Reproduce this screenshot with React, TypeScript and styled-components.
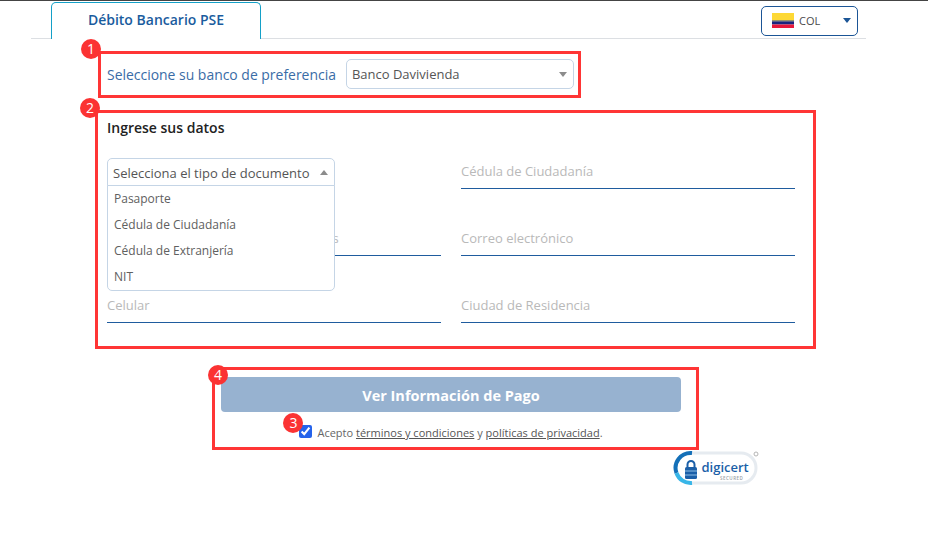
import React from 'react';
import styled, { createGlobalStyle } from 'styled-components';

const GlobalStyle = createGlobalStyle`
  html, body {
    margin: 0;
    padding: 0;
    background: #ffffff;
    font-family: 'Open Sans', 'Liberation Sans', sans-serif;
  }
`;

const Page = styled.div`
  width: 928px;
  height: 543px;
  overflow: hidden;
  border-top: 1px solid #444444;
  box-sizing: border-box;
`;

const Header = styled.header`
  display: flex;
  align-items: flex-end;
  justify-content: space-between;
  height: 37px;
  margin: 0 62px 0 31px;
  padding: 0 8px 0 20px;
  border-bottom: 1px solid #dcdfe3;
`;

const Tab = styled.div`
  box-sizing: border-box;
  width: 210px;
  height: 37px;
  margin-bottom: -1px;
  display: flex;
  align-items: center;
  justify-content: center;
  padding-bottom: 3px;
  background: #ffffff;
  border: 1px solid #14a0c8;
  border-bottom: 0;
  border-radius: 5px 5px 0 0;
  color: #1a5c9e;
  font-size: 14px;
  font-weight: 600;
`;

const CurrencySelect = styled.div`
  box-sizing: border-box;
  width: 97px;
  height: 30px;
  margin-bottom: 2px;
  display: flex;
  align-items: center;
  padding: 0 6px 1px 10px;
  border: 1px solid #1b5596;
  border-radius: 5px;
  color: #4a4a4a;
  font-size: 11px;
`;

const CurrencyCode = styled.span`
  margin-left: 5px;
  flex: 1;
`;

const Marked = styled.section<{ $left: number; $width: number; $height: number; $top: number }>`
  position: relative;
  box-sizing: border-box;
  margin: ${(p) => p.$top}px 0 0 ${(p) => p.$left}px;
  width: ${(p) => p.$width}px;
  height: ${(p) => p.$height}px;
  border: 3px solid #ff3535;
`;

const Badge = styled.span<{ $x: number; $y: number }>`
  position: absolute;
  left: ${(p) => p.$x}px;
  top: ${(p) => p.$y}px;
  width: 20px;
  height: 20px;
  border-radius: 50%;
  background: #fb3333;
  color: #ffffff;
  font-size: 14px;
  line-height: 19px;
  text-align: center;
`;

const BankRow = styled.div`
  box-sizing: border-box;
  display: flex;
  align-items: center;
  gap: 10px;
  height: 100%;
  padding: 0 0 1px 6px;
`;

const BankLabel = styled.label`
  color: #3a6ca6;
  font-size: 13.95px;
`;

const SelectBox = styled.div<{ $open?: boolean }>`
  box-sizing: border-box;
  width: 228px;
  height: ${(p) => (p.$open ? 28 : 30)}px;
  display: flex;
  align-items: center;
  justify-content: space-between;
  padding: ${(p) => (p.$open ? '1px' : '0')} 6px 0 5px;
  background: #ffffff;
  border: 1px solid #c5d5e6;
  border-radius: ${(p) => (p.$open ? '5px 5px 0 0' : '5px')};
  color: #555555;
  font-size: 13px;
`;

const Caret = styled.i<{ $up?: boolean; $color?: string }>`
  width: 0;
  height: 0;
  border-left: 4px solid transparent;
  border-right: 4px solid transparent;
  ${(p) => (p.$up ? 'border-bottom' : 'border-top')}: 5px solid ${(p) => p.$color ?? '#8c8c8c'};
`;

const DataBody = styled.div`
  padding: 5px 18px 0 9px;
`;

const Heading = styled.h2`
  margin: 0;
  color: #222222;
  font-size: 14px;
  font-weight: 600;
  line-height: 20px;
`;

const FieldGrid = styled.div`
  position: relative;
  display: grid;
  grid-template-columns: 334px 334px;
  grid-auto-rows: 67px;
  column-gap: 20px;
  margin-top: -16px;
`;

const Field = styled.div`
  box-sizing: border-box;
  height: 67px;
  display: flex;
  align-items: flex-end;
  padding-bottom: 8px;
  border-bottom: 1px solid #1f5c9e;
  color: #b9b9b9;
  font-size: 13px;
  line-height: 18px;
`;

const SelectSlot = styled.div`
  height: 67px;
`;

const Dropdown = styled.div`
  position: absolute;
  left: 0;
  top: 36px;
  z-index: 2;
  width: 228px;
`;

const Menu = styled.ul`
  box-sizing: border-box;
  height: 106px;
  margin: -1px 0 0;
  padding: 0;
  list-style: none;
  background: #ffffff;
  border: 1px solid #c5d5e6;
  border-radius: 0 0 5px 5px;
`;

const MenuItem = styled.li`
  height: 26px;
  padding-left: 6px;
  color: #606060;
  font-size: 12px;
  line-height: 25px;
`;

const PayBody = styled.div`
  display: flex;
  flex-direction: column;
  align-items: center;
  padding: 7px 15px 0 6px;
`;

const PayButton = styled.button`
  width: 460px;
  height: 35px;
  padding: 2px 0 0;
  border: 0;
  border-radius: 4px;
  background: #97b2d0;
  color: #ffffff;
  font-family: inherit;
  font-size: 14.5px;
  font-weight: 700;
`;

const Terms = styled.label`
  position: relative;
  display: flex;
  align-items: center;
  margin-top: 13px;
  color: #666666;
  font-size: 11px;
`;

const Check = styled.input`
  width: 13px;
  height: 13px;
  margin: -1px 5px 1px 0;
  accent-color: #2563eb;
`;

const TermsLink = styled.a`
  color: #555555;
  text-decoration: underline;
`;

const Seal = styled.div`
  margin: 0 0 0 673px;
  width: 88px;
  height: 40px;
`;

const ColombiaFlag = () => (
  <svg width="22" height="15" viewBox="0 0 22 15">
    <rect width="22" height="7.5" fill="#fdd835" />
    <rect y="7.5" width="22" height="1" fill="#3b3b3b" />
    <rect y="8.5" width="22" height="3" fill="#1a237e" />
    <rect y="11.5" width="22" height="3.5" fill="#e8173a" />
  </svg>
);

const DigicertSeal = () => (
  <svg width="88" height="40" viewBox="0 0 88 40">
    <rect x="2" y="3" width="81" height="30" rx="15" fill="#ffffff" stroke="#e6ebf0" strokeWidth="3" />
    <path d="M19 3 A15 15 0 0 0 3.5 23" fill="none" stroke="#1470b8" strokeWidth="4" />
    <path d="M3.5 23 A15 15 0 0 0 19 33" fill="none" stroke="#38b6e8" strokeWidth="4" />
    <path d="M14.5 17 v-2.5 a3.5 3.5 0 0 1 7 0 v2.5" fill="none" stroke="#1b5fa8" strokeWidth="2" />
    <rect x="12" y="17" width="12" height="12" rx="1.5" fill="#1b5fa8" />
    <path d="M12 21 h12 M12 25 h12" stroke="#8fc0e6" strokeWidth="1" />
    <text x="28.5" y="22" fontFamily="Open Sans, sans-serif" fontSize="13" fontWeight="600" fill="#1b5fa8">digicert</text>
    <text x="47" y="29.5" fontFamily="Open Sans, sans-serif" fontSize="4.5" fontWeight="600" letterSpacing="0.5" fill="#9aa0a6">SECURED</text>
    <circle cx="83" cy="4" r="2" fill="#ffffff" stroke="#b5b5b5" />
  </svg>
);

const documentTypes = ['Pasaporte', 'Cédula de Ciudadanía', 'Cédula de Extranjería', 'NIT'];

export default function App() {
  return (
    <Page>
      <GlobalStyle />
      <Header>
        <Tab>Débito Bancario PSE</Tab>
        <CurrencySelect>
          <ColombiaFlag />
          <CurrencyCode>COL</CurrencyCode>
          <Caret $color="#1b5596" />
        </CurrencySelect>
      </Header>

      <Marked $top={12} $left={98} $width={483} $height={47}>
        <Badge $x={-20} $y={-15}>1</Badge>
        <BankRow>
          <BankLabel>Seleccione su banco de preferencia</BankLabel>
          <SelectBox>
            Banco Davivienda
            <Caret />
          </SelectBox>
        </BankRow>
      </Marked>

      <Marked $top={12} $left={95} $width={721} $height={239}>
        <Badge $x={-18} $y={-15}>2</Badge>
        <DataBody>
          <Heading>Ingrese sus datos</Heading>
          <FieldGrid>
            <SelectSlot />
            <Field>Cédula de Ciudadanía</Field>
            <Field>Nombres y Apellidos de los pagadores</Field>
            <Field>Correo electrónico</Field>
            <Field>Celular</Field>
            <Field>Ciudad de Residencia</Field>
            <Dropdown>
              <SelectBox $open>
                Selecciona el tipo de documento
                <Caret $up />
              </SelectBox>
              <Menu>
                {documentTypes.map((name) => (
                  <MenuItem key={name}>{name}</MenuItem>
                ))}
              </Menu>
            </Dropdown>
          </FieldGrid>
        </DataBody>
      </Marked>

      <Marked $top={18} $left={212} $width={487} $height={83}>
        <Badge $x={-7} $y={-5}>4</Badge>
        <PayBody>
          <PayButton>Ver Información de Pago</PayButton>
          <Terms>
            <Badge $x={-16} $y={-12}>3</Badge>
            <Check type="checkbox" defaultChecked />
            <span>
              Acepto <TermsLink>términos y condiciones</TermsLink> y <TermsLink>políticas de privacidad</TermsLink>.
            </span>
          </Terms>
        </PayBody>
      </Marked>

      <Seal>
        <DigicertSeal />
      </Seal>
    </Page>
  );
}
